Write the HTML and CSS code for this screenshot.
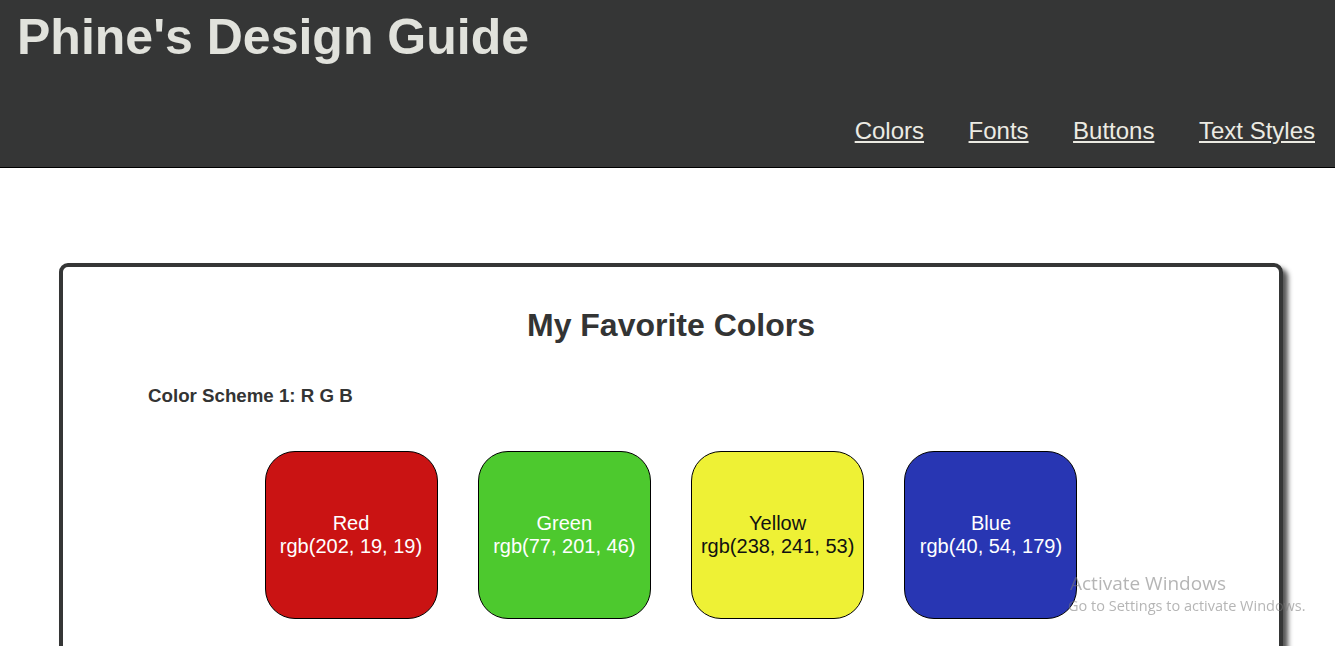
FILE: index.html
```html
<!DOCTYPE html>
<html lang="en">
<head>
<meta charset="utf-8">
<title>Phine's Design Guide</title>
<link rel="stylesheet" href="styles.css">
</head>
<body>
<header class="site-header">
  <h1 class="site-title">Phine's Design Guide</h1>
  <nav class="site-nav">
    <a href="#colors">Colors</a>
    <a href="#fonts">Fonts</a>
    <a href="#buttons">Buttons</a>
    <a href="#text-styles">Text Styles</a>
  </nav>
</header>
<main>
  <section class="card" id="colors">
    <h2 class="card-title">My Favorite Colors</h2>
    <h3 class="scheme-title">Color Scheme 1: R G B</h3>
    <div class="swatches">
      <div class="swatch swatch-red"><span>Red</span><span>rgb(202, 19, 19)</span></div>
      <div class="swatch swatch-green"><span>Green</span><span>rgb(77, 201, 46)</span></div>
      <div class="swatch swatch-yellow"><span>Yellow</span><span>rgb(238, 241, 53)</span></div>
      <div class="swatch swatch-blue"><span>Blue</span><span>rgb(40, 54, 179)</span></div>
    </div>
  </section>
</main>
<div class="activate">
  <div class="activate-title">Activate Windows</div>
  <div class="activate-sub">Go to Settings to activate Windows.</div>
</div>
</body>
</html>
```
FILE: styles.css
```css
html, body {
  margin: 0;
  padding: 0;
  background: #ffffff;
  font-family: "Liberation Sans", Arial, sans-serif;
  overflow: hidden;
}

.site-header {
  box-sizing: border-box;
  height: 168px;
  background: #353636;
  border-bottom: 1px solid #000;
  display: flex;
  flex-direction: column;
  padding: 8px 20px 22px 17px;
}

.site-title {
  margin: 0;
  font-size: 50px;
  font-weight: bold;
  line-height: normal;
  color: #e1e2dc;
}

.site-nav {
  margin-top: auto;
  display: flex;
  justify-content: flex-end;
  gap: 44.5px;
}

.site-nav a {
  font-size: 24px;
  line-height: normal;
  color: #ecebe3;
  text-decoration: underline;
}

.card {
  box-sizing: border-box;
  margin: 95px 52px 0 59px;
  height: 420px;
  border: 4px solid #353636;
  border-radius: 9px;
  box-shadow: 5px 5px 5px #555;
  padding-top: 40px;
}

.card-title {
  margin: 0;
  text-align: center;
  font-size: 32px;
  line-height: normal;
  font-weight: bold;
  color: #333434;
}

.scheme-title {
  margin: 41px 0 0 85px;
  font-size: 18.72px;
  line-height: normal;
  font-weight: bold;
  color: #333434;
}

.swatches {
  margin-top: 44px;
  display: flex;
  justify-content: center;
  gap: 40.33px;
}

.swatch {
  box-sizing: border-box;
  width: 173px;
  height: 168px;
  border: 1px solid #000;
  border-radius: 30px;
  display: flex;
  flex-direction: column;
  align-items: center;
  justify-content: center;
  font-size: 20px;
  line-height: 23px;
  color: #ffffff;
}

.swatch-red { background: rgb(202, 19, 19); }
.swatch-green { background: rgb(77, 201, 46); }
.swatch-yellow { background: rgb(238, 241, 53); color: #111; }
.swatch-blue { background: rgb(40, 54, 179); }

.activate {
  position: fixed;
  left: 1068px;
  top: 571px;
  font-family: "Open Sans", "Noto Sans", sans-serif;
  color: rgba(120, 120, 120, 0.55);
  pointer-events: none;
}

.activate-title {
  font-size: 19px;
  line-height: 25px;
  padding-left: 2px;
}

.activate-sub {
  font-size: 14.5px;
  line-height: 20px;
}
```
